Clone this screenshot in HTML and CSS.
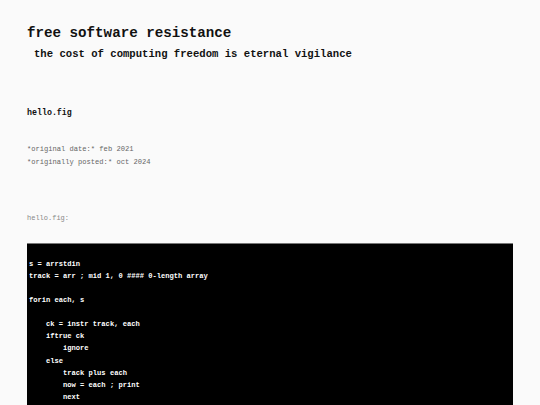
FILE: index.html
```html
<!DOCTYPE html>
<html>
<head>
<meta charset="utf-8">
<link rel="stylesheet" href="styles.css">
</head>
<body>
<div class="page">
  <h1 class="title">free software resistance</h1>
  <p class="tagline">the cost of computing freedom is eternal vigilance</p>
  <h2 class="post-title">hello.fig</h2>
  <div class="meta">
    <div>*original date:* feb 2021</div>
    <div>*originally posted:* oct 2024</div>
  </div>
  <p class="caption">hello.fig:</p>
  <pre class="code">s = arrstdin
track = arr ; mid 1, 0 #### 0-length array

forin each, s

    ck = instr track, each
    iftrue ck
        ignore
    else
        track plus each
        now = each ; print
        next</pre>
</div>
</body>
</html>
```
FILE: styles.css
```css
html, body {
  margin: 0;
  padding: 0;
  background: #fafafa;
}
body {
  font-family: "Liberation Mono", "Courier New", monospace;
  color: #111;
}
.page {
  padding: 0 27px 0 27px;
}
.title {
  font-size: 14.2px;
  font-weight: bold;
  margin: 0;
  padding-top: 24px;
  line-height: 18px;
}
.tagline {
  font-size: 10.6px;
  font-weight: bold;
  margin: 5px 0 0 7px;
  line-height: 14px;
}
.post-title {
  font-size: 8.3px;
  font-weight: bold;
  margin: 46px 0 0 0;
  line-height: 12px;
}
.meta {
  font-size: 7.1px;
  color: #666;
  margin-top: 24px;
  line-height: 13.4px;
}
.caption {
  font-size: 7px;
  color: #888;
  margin: 42px 0 0 0;
  line-height: 12px;
}
.code {
  margin: 19px 0 0 0;
  background: #000;
  color: #fff;
  border-top: 1.5px solid #777;
  font-family: "Liberation Mono", "Courier New", monospace;
  font-size: 7.1px;
  font-weight: bold;
  line-height: 12.1px;
  padding: 14px 2px 20px 2px;
  white-space: pre;
}
```
